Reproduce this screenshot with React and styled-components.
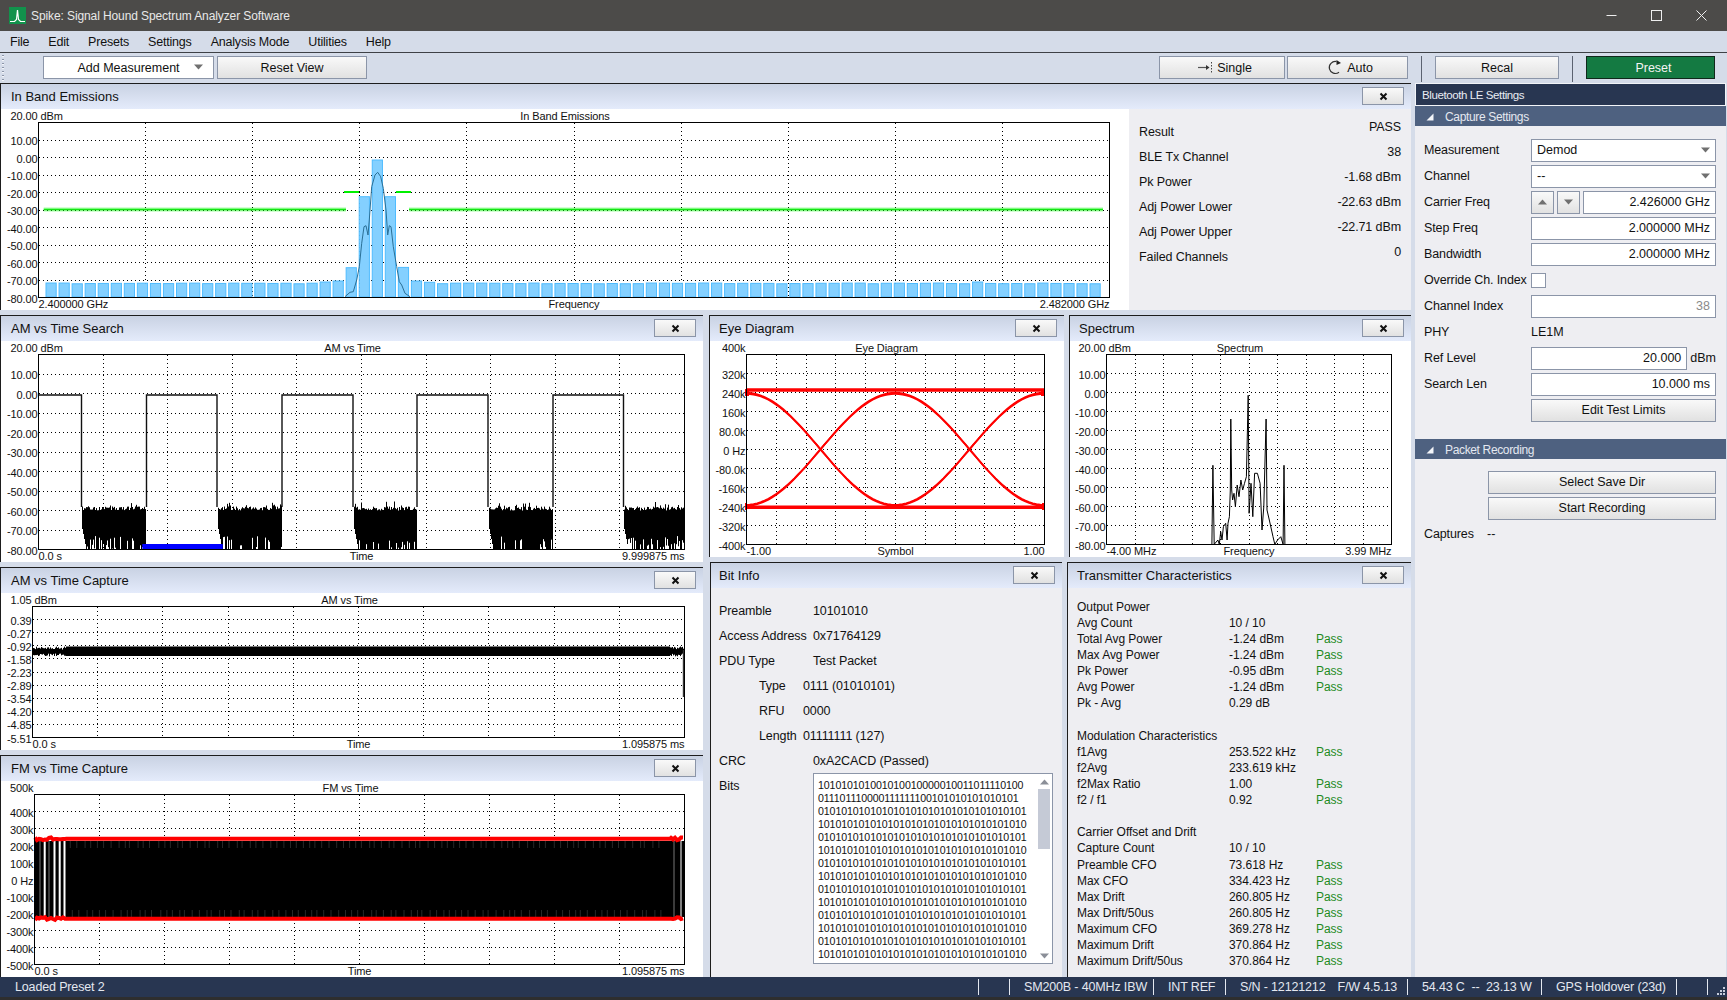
import React from 'react';
import styled, { createGlobalStyle } from 'styled-components';

const sans = '"Liberation Sans", Arial, sans-serif';
const colors = {
  chrome: '#d5dce9',
  panel: '#eeeef2',
  navy: '#283651',
  slate: '#4e6180',
  edge: '#8b95a8',
  rule: '#1d1d1d',
};

const Global = createGlobalStyle`
  html, body { margin: 0; padding: 0; background: ${colors.chrome}; overflow: hidden; }
  * { box-sizing: border-box; }
`;

const Window = styled.div`
  display: flex;
  flex-direction: column;
  width: 1727px;
  height: 1000px;
  overflow: hidden;
  background: ${colors.chrome};
  color: #111;
  font: 12.5px ${sans};
`;

const TitleBar = styled.div`
  display: flex;
  align-items: center;
  flex: 0 0 31px;
  padding: 0 6px 0 9px;
  gap: 5px;
  background: #4c4b49;
  color: #e8e8e8;
  font-size: 12px;
  letter-spacing: -0.1px;
`;

const TitleText = styled.span`
  flex: 1;
`;

const WindowButton = styled.div`
  display: flex;
  align-items: center;
  justify-content: center;
  width: 40px;
  height: 31px;
`;

const MenuBar = styled.div`
  display: flex;
  align-items: center;
  flex: 0 0 21px;
  padding-left: 10px;
  gap: 19px;
  letter-spacing: -0.2px;
`;

const ToolBar = styled.div`
  position: relative;
  display: flex;
  align-items: flex-start;
  flex: 0 0 31px;
  padding: 3px 12px 0 43px;
  border-top: 1px solid #3e4146;
`;

const Grip = styled.div`
  position: absolute;
  left: 2px;
  top: 2px;
  width: 2px;
  height: 26px;
  background: repeating-linear-gradient(#8b95a8 0 1px, #f4f6fa 1px 2px, transparent 2px 4px);
`;

const Button = styled.div`
  position: relative;
  display: flex;
  align-items: center;
  justify-content: center;
  gap: 4px;
  width: ${p => p.$w ? `${p.$w}px` : '100%'};
  height: 23px;
  margin-left: ${p => p.$ml || 0}px;
  padding-left: ${p => p.$shift || 0}px;
  border: 1px solid ${colors.edge};
  background: linear-gradient(#f9f9f9, #e1e1e1);
`;

const WhiteButton = styled(Button)`
  background: #fff;
`;

const PresetButton = styled(Button)`
  background: #147a42;
  border-color: #10281b;
  color: #f4f4f4;
`;

const CaretSlot = styled.span`
  display: flex;
  position: absolute;
  right: 10px;
  top: 7px;
`;

const Spacer = styled.div`
  flex: 1;
`;

const Separator = styled.div`
  flex: 0 0 1px;
  height: 26px;
  margin: 0 13px;
  background: #5b6270;
`;

const Main = styled.div`
  display: flex;
  flex: 1;
  min-height: 0;
`;

const Workspace = styled.div`
  display: flex;
  flex-direction: column;
  flex: 0 0 1411px;
  gap: 5px;
`;

const LowerArea = styled.div`
  display: flex;
  flex: 1;
  min-height: 0;
  gap: 6px;
`;

const Column = styled.div`
  display: flex;
  flex-direction: column;
  flex: ${p => p.$w ? `0 0 ${p.$w}px` : '1'};
  min-width: 0;
  gap: 5px;
`;

const Row = styled.div`
  display: flex;
  flex: ${p => p.$h ? `0 0 ${p.$h}px` : '1'};
  min-height: 0;
  gap: ${p => p.$gap || 0}px;
  padding-left: ${p => p.$inset || 0}px;
`;

const PanelBox = styled.section`
  display: flex;
  flex-direction: column;
  flex: ${p => p.$grow ? '1' : `0 0 ${p.$size}px`};
  min-width: 0;
  min-height: 0;
  border-top: 1px solid ${colors.rule};
  border-left: 1px solid ${colors.rule};
`;

const PanelHead = styled.header`
  display: flex;
  align-items: center;
  justify-content: space-between;
  flex: 0 0 25px;
  padding: 0 7px 1px ${p => p.$pad}px;
  background: linear-gradient(#c9d2e3, #e4ebfb);
  font-size: 13px;
`;

const CloseButton = styled.div`
  display: flex;
  align-items: center;
  justify-content: center;
  width: 42px;
  height: 18px;
  border: 1px solid ${colors.edge};
  background: linear-gradient(#f9f9f9, #e1e1e1);
`;

const PanelBody = styled.div`
  display: flex;
  flex: 1;
  min-height: 0;
  background: ${p => p.$light ? colors.panel : '#fff'};
`;

const ChartSvg = styled.svg`
  display: block;
  flex: none;
  text {
    font: 11px ${sans};
    letter-spacing: -0.1px;
    fill: #111;
  }
`;

const ResultList = styled.div`
  flex: 1;
  padding: 9px 10px 0 10px;
  background: ${colors.panel};
  letter-spacing: -0.1px;
`;

const ResultRow = styled.div`
  display: flex;
  justify-content: space-between;
  height: 25px;
`;

const ResultLabel = styled.span`
  padding-top: 7px;
`;

const ResultValue = styled.span`
  padding-top: 2px;
`;

const BitList = styled.div`
  flex: 1;
  padding: 10px 9px 0 8px;
`;

const BitRow = styled.div`
  display: flex;
  align-items: ${p => p.$top ? 'flex-start' : 'center'};
  height: ${p => p.$top ? 'auto' : '25px'};
  padding-left: ${p => p.$indent || 0}px;
  letter-spacing: -0.1px;
`;

const BitLabel = styled.span`
  flex: 0 0 ${p => p.$w}px;
  padding-top: ${p => p.$top ? 6 : 0}px;
`;

const BitBox = styled.div`
  display: flex;
  flex: 1;
  height: 191px;
  border: 1px solid ${colors.edge};
  background: #fff;
`;

const BitText = styled.pre`
  flex: 1;
  margin: 0;
  padding: 5px 0 0 4px;
  overflow: hidden;
  font: 10.6px/13px ${sans};
`;

const ScrollTrack = styled.div`
  display: flex;
  flex-direction: column;
  align-items: center;
  flex: 0 0 16px;
  padding: 5px 2px 4px;
`;

const ScrollThumb = styled.div`
  width: 12px;
  height: 60px;
  margin: 4px 0 auto;
  background: #c5cad6;
`;

const CharGrid = styled.div`
  display: grid;
  grid-template-columns: 152px 87px 1fr;
  grid-auto-rows: 16.14px;
  align-items: center;
  flex: 1;
  padding: 10.5px 0 0 9px;
  font-size: 12px;
  letter-spacing: -0.05px;
`;

const PassText = styled.span`
  color: #1e8b1e;
`;

const GroupTitle = styled.span`
  grid-column: 1 / -1;
`;

const BlankRow = styled.span`
  grid-column: 1 / -1;
`;

const SidePanel = styled.aside`
  flex: 1;
  margin: 0 1px 0 4px;
  background: ${colors.panel};
`;

const SideTitle = styled.div`
  display: flex;
  align-items: center;
  height: 23px;
  padding-left: 6px;
  border: 1px solid #f2f4f8;
  background: ${colors.navy};
  color: #e9ecf3;
  font-size: 11.5px;
  letter-spacing: -0.4px;
`;

const SectionHead = styled.div`
  display: flex;
  align-items: center;
  gap: 11px;
  height: 20px;
  padding: 1px 0 0 11px;
  background: ${colors.slate};
  color: #e4e8f0;
  font-size: 12px;
  letter-spacing: -0.35px;
`;

const SectionBody = styled.div`
  padding: ${p => p.$top}px 10px ${p => p.$bottom}px 9px;
`;

const FormRow = styled.div`
  display: flex;
  align-items: center;
  justify-content: ${p => p.$end ? 'flex-end' : 'flex-start'};
  height: 26px;
`;

const FieldLabel = styled.span`
  flex: 0 0 ${p => p.$w || 107}px;
  letter-spacing: -0.12px;
`;

const Field = styled.div`
  display: flex;
  align-items: center;
  justify-content: ${p => p.$left ? 'space-between' : 'flex-end'};
  flex: 1;
  height: 23px;
  padding: 0 5px;
  border: 1px solid ${colors.edge};
  background: #fff;
  color: ${p => p.$muted ? '#8a8a8a' : 'inherit'};
`;

const SpinButton = styled(Button)`
  flex: 0 0 23px;
  margin-right: 3px;
`;

const CheckBox = styled.div`
  width: 15px;
  height: 15px;
  border: 1px solid ${colors.edge};
  background: #fff;
`;

const UnitText = styled.span`
  flex: 0 0 26px;
  padding-left: 3px;
`;

const StatusBar = styled.footer`
  display: flex;
  align-items: center;
  flex: 0 0 20px;
  background: ${colors.navy};
  color: #e4e8f0;
  font-size: 12.5px;
`;

const StatusCell = styled.div`
  display: flex;
  align-items: center;
  gap: 12px;
  flex: 0 0 ${p => p.$w}px;
  height: 16px;
  padding-left: ${p => p.$pad || 14}px;
  border-right: 1px solid #e4e8f0;
  letter-spacing: -0.15px;
  white-space: pre;
`;

const ResizeGrip = styled.div`
  display: flex;
  align-items: flex-end;
  justify-content: flex-end;
  flex: 1;
  height: 20px;
  padding: 0 2px 2px 0;
`;

const BottomEdge = styled.div`
  flex: 0 0 3px;
  background: #2e2e2e;
`;

// seeded so the noise in the traces stays the same on every load
const makeRandom = seed => () => {
  seed = (seed + 0x6d2b79f5) | 0;
  let t = Math.imul(seed ^ (seed >>> 15), 1 | seed);
  t = (t + Math.imul(t ^ (t >>> 7), 61 | t)) ^ t;
  return ((t ^ (t >>> 14)) >>> 0) / 4294967296;
};

const range = (n, fn) => Array.from({ length: n }, (_, i) => fn(i));
const polyline = pts => pts.map(([x, y], i) => `${i ? 'L' : 'M'}${x.toFixed(1)} ${y.toFixed(1)}`).join('');

const dbmLabels = ['10.00', '0.00', '-10.00', '-20.00', '-30.00', '-40.00', '-50.00', '-60.00', '-70.00', '-80.00'];
const freqLabels = ['400k', '300k', '200k', '100k', '0 Hz', '-100k', '-200k', '-300k', '-400k', '-500k'];
const eyeLabels = ['320k', '240k', '160k', '80.0k', '0 Hz', '-80.0k', '-160k', '-240k', '-320k', '-400k'];
const capLabels = ['0.39', '-0.27', '-0.92', '-1.58', '-2.23', '-2.89', '-3.54', '-4.20', '-4.85', '-5.51'];

const Chart = ({ view, plot, title, top, unit, labels, bottom, children }) => {
  const [ox, oy, w, h] = view;
  const [l, t, r, b] = plot;
  const dx = (r - l) / 10;
  const dy = (b - t) / 10;
  const mid = (l + r) / 2;
  return (
    <ChartSvg width={w} height={h} viewBox={`${ox} ${oy} ${w} ${h}`}>
      <g stroke="#000" strokeDasharray="1.5 2.5" shapeRendering="crispEdges">
        {range(9, i => <line key={i} x1={l + dx * (i + 1)} x2={l + dx * (i + 1)} y1={t} y2={b} />)}
        {range(9, i => <line key={i} y1={t + dy * (i + 1)} y2={t + dy * (i + 1)} x1={l} x2={r} />)}
      </g>
      {children}
      <rect x={l} y={t} width={r - l} height={b - t} fill="none" stroke="#000" shapeRendering="crispEdges" />
      <text x={mid - 9} y={oy + 7} textAnchor="middle" dominantBaseline="central" letterSpacing="-0.25">{title}</text>
      <text x={l - 1} y={oy + 7} textAnchor="end" dominantBaseline="central">{top}</text>
      {unit && <text x={l + 2} y={oy + 7} dominantBaseline="central">{unit}</text>}
      {labels.map((s, i) => (
        <text key={s} x={l - 1} y={t + dy * (i + 1) + 1} textAnchor="end" dominantBaseline="central">{s}</text>
      ))}
      <text x={l} y={b + 6.5} dominantBaseline="central">{bottom[0]}</text>
      <text x={mid} y={b + 6.5} textAnchor="middle" dominantBaseline="central">{bottom[1]}</text>
      <text x={r} y={b + 6.5} textAnchor="end" dominantBaseline="central">{bottom[2]}</text>
    </ChartSvg>
  );
};

const barTops = { 21: 282, 22: 281, 23: 267.7, 24: 196.7, 25: 160, 26: 196.7, 27: 267.4, 28: 281, 29: 282.3, 71: 282 };

const BandTrace = () => {
  const rand = makeRandom(7);
  const bars = range(81, i => {
    const y = barTops[i] ?? 283 + rand() * 0.8;
    return <rect key={i} x={46 + i * 13.05} y={y} width={10.2} height={297 - y} fill="#84d0ff" stroke="#4fbcff" />;
  });
  const trace = [[135, 500], [150, 487], [160, 485], [170, 450], [178, 410], [185, 340], [192, 290], [198, 287], [204, 315], [208, 270], [215, 170], [225, 135], [233, 127], [242, 140], [250, 175], [258, 240], [263, 315], [268, 287], [273, 290], [280, 350], [290, 410], [298, 455], [305, 465], [315, 490], [330, 500]]
    .map(([x, y]) => [300 + x / 3, 130 + y / 3]);
  return (
    <>
      {bars}
      <path d={polyline(trace)} fill="none" stroke="#2a6f96" />
      <path d="M43.7 209.5H346M409 209.5H1103" stroke="#00ff00" strokeOpacity="0.35" strokeWidth="4" />
      <path d="M43.7 209.5H346M409 209.5H1103" stroke="#14e614" strokeWidth="1.5" />
      <path d="M344 192H359M396 192H411" stroke="#00f000" strokeWidth="2" />
    </>
  );
};

const NoiseBlock = ({ from, to, seed }) => {
  const rand = makeRandom(seed);
  let d = '';
  for (let x = from; x < to; x += 1) {
    const spike = rand() < 0.14 ? rand() * 6 : 0;
    const top = 506.5 + rand() * 4 - spike;
    const end = rand() < 0.3 ? 549 - rand() * 13 : 549;
    const edge = x - from < 4 ? 549 - (4 - (x - from)) * 5 : end;
    d += `M${x + 0.5} ${top.toFixed(1)}V${edge.toFixed(1)}`;
  }
  return <path d={d} stroke="#000" fill="none" />;
};

const SearchTrace = () => (
  <>
    <path d="M38 395H81.5V507M146.5 507V395H217V507M282 507V395H353V507M417 507V395H488V507M553 507V395H623.5V507" fill="none" stroke="#111" strokeWidth="1.4" />
    <NoiseBlock from={82} to={146} seed={1} />
    <NoiseBlock from={218} to={282} seed={2} />
    <NoiseBlock from={354} to={417} seed={3} />
    <NoiseBlock from={489} to={553} seed={4} />
    <NoiseBlock from={624} to={684} seed={5} />
    <rect x={142.3} y={544} width={80.4} height={5} fill="#0000ff" />
  </>
);

const CaptureTrace = () => {
  const rand = makeRandom(11);
  const jag = (from, to) => {
    let d = '';
    for (let x = from; x < to; x += 1) d += `M${x + 0.5} ${(646.5 + rand() * 3).toFixed(1)}V${(653.5 + rand() * 3).toFixed(1)}`;
    return d;
  };
  return (
    <>
      <path d={jag(33, 66)} stroke="#000" fill="none" />
      <rect x={66} y={646.5} width={604} height={9.5} fill="#000" />
      <path d={jag(670, 684)} stroke="#000" fill="none" />
      <path d="M683.5 650V697" stroke="#333" strokeWidth="1.4" />
    </>
  );
};

const FmTrace = () => {
  const rand = makeRandom(23);
  const edge = y => {
    const pts = [];
    for (let x = 35; x <= 66; x += 2) pts.push([x, y + (rand() - 0.5) * 3]);
    pts.push([66.5, y], [670, y]);
    for (let x = 671; x <= 684; x += 2) pts.push([x, y + (rand() - 0.5) * 3]);
    return polyline(pts);
  };
  const texture = range(90, i => 70 + i * 6.6 + rand() * 3).map(x => `M${x.toFixed(1)} 841V848M${(x + 2).toFixed(1)} 910V917`).join('');
  return (
    <>
      <rect x={35} y={841} width={649} height={76} fill="#000" />
      <path d={texture} stroke="#3a3a3a" strokeWidth="0.7" />
      <path d="M44.7 841V917M54.5 841V917M59.7 841V917M64.5 841V917" stroke="#fff" strokeWidth="2" />
      <path d="M40 841V917M49 841V917M674 841V917" stroke="#777" strokeWidth="1" />
      <path d="M681 841V917" stroke="#fff" strokeWidth="1" />
      <path d={edge(838.7)} fill="none" stroke="#ff0000" strokeWidth="4" />
      <path d={edge(918.7)} fill="none" stroke="#ff0000" strokeWidth="4" />
    </>
  );
};

const EyeTrace = () => {
  const sCurve = (x0, x1, dir, amp) => polyline(range(41, i => {
    const t = i / 40;
    return [x0 + (x1 - x0) * t, 449.3 - dir * amp * Math.cos(Math.PI * t)];
  }));
  const curves = [[746, 895, 1], [746, 895, -1], [895, 1044, 1], [895, 1044, -1]];
  return (
    <>
      <path d="M746 390H1044M746 507.3H1044" stroke="#ff0000" strokeWidth="3.5" />
      {curves.map(([a, b, dir]) => [55.5, 56.5].map(amp => (
        <path key={`${a}${dir}${amp}`} d={sCurve(a, b, dir, amp)} fill="none" stroke="#ff0000" strokeWidth="1.8" />
      )))}
      <path d="M746 389V396M748 389V396M1044 389V396M1042 389V396M746 503V510M1043 503V510" stroke="#ff0000" strokeWidth="2" />
    </>
  );
};

const spectrumPoints = [[1115, 703], [1117, 466], [1120, 703], [1128, 690], [1131, 703], [1134, 665], [1137, 690], [1140, 650], [1145, 640], [1148, 690], [1150, 640], [1153, 620], [1155, 540], [1156, 327], [1158, 540], [1160, 570], [1163, 550], [1166, 590], [1170, 525], [1174, 560], [1178, 510], [1182, 540], [1186, 520], [1190, 500], [1194, 256], [1196, 610], [1200, 520], [1204, 620], [1208, 490], [1214, 490], [1220, 520], [1224, 660], [1228, 590], [1233, 327], [1235, 600], [1240, 630], [1248, 680], [1252, 703], [1258, 690], [1265, 680], [1270, 703], [1272, 466], [1274, 703]];

const SpectrumTrace = () => (
  <path d={polyline(spectrumPoints.map(([x, y]) => [700 + x / 2.178, 310 + y / 3]))} fill="none" stroke="#000" />
);

const CloseIcon = () => (
  <svg width="9" height="9" viewBox="0 0 9 9"><path d="M1.5 1.5l6 6M7.5 1.5l-6 6" stroke="#111" strokeWidth="2" /></svg>
);

const Panel = ({ title, size, grow, light, pad = 9, children }) => (
  <PanelBox $size={size} $grow={grow}>
    <PanelHead $pad={pad}>{title}<CloseButton><CloseIcon /></CloseButton></PanelHead>
    <PanelBody $light={light}>{children}</PanelBody>
  </PanelBox>
);

const Caret = ({ up, color = '#707070' }) => (
  <svg width="9" height="6" viewBox="0 0 9 6"><path d={up ? 'M4.5 0.5L9 5.5H0z' : 'M0 0.5H9L4.5 5.5z'} fill={color} /></svg>
);

const results = [['Result', 'PASS'], ['BLE Tx Channel', '38'], ['Pk Power', '-1.68 dBm'], ['Adj Power Lower', '-22.63 dBm'], ['Adj Power Upper', '-22.71 dBm'], ['Failed Channels', '0']];

const bitLines = [
  '101010101001010010000010011011110100',
  '011101110000111111100101010101010101',
  ...range(13, i => (i % 2 ? '10' : '01').repeat(18)),
];

const charRows = [
  ['Output Power'],
  ['Avg Count', '10 / 10'],
  ['Total Avg Power', '-1.24 dBm', 'Pass'],
  ['Max Avg Power', '-1.24 dBm', 'Pass'],
  ['Pk Power', '-0.95 dBm', 'Pass'],
  ['Avg Power', '-1.24 dBm', 'Pass'],
  ['Pk - Avg', '0.29 dB'],
  [],
  ['Modulation Characteristics'],
  ['f1Avg', '253.522 kHz', 'Pass'],
  ['f2Avg', '233.619 kHz'],
  ['f2Max Ratio', '1.00', 'Pass'],
  ['f2 / f1', '0.92', 'Pass'],
  [],
  ['Carrier Offset and Drift'],
  ['Capture Count', '10 / 10'],
  ['Preamble CFO', '73.618 Hz', 'Pass'],
  ['Max CFO', '334.423 Hz', 'Pass'],
  ['Max Drift', '260.805 Hz', 'Pass'],
  ['Max Drift/50us', '260.805 Hz', 'Pass'],
  ['Maximum CFO', '369.278 Hz', 'Pass'],
  ['Maximum Drift', '370.864 Hz', 'Pass'],
  ['Maximum Drift/50us', '370.864 Hz', 'Pass'],
];

const CharRow = ({ cells }) => {
  if (!cells.length) return <BlankRow />;
  if (cells.length === 1) return <GroupTitle>{cells[0]}</GroupTitle>;
  return (
    <>
      <span>{cells[0]}</span>
      <span>{cells[1]}</span>
      <PassText>{cells[2]}</PassText>
    </>
  );
};

const SelectField = ({ value }) => (
  <Field $left>{value}<Caret /></Field>
);

const Triangle = () => (
  <svg width="8" height="8" viewBox="0 0 8 8"><path d="M7.5 0.5V7.5H0.5z" fill="#f4f6fa" /></svg>
);

export default function App() {
  return (
    <Window>
      <Global />
      <TitleBar>
        <svg width="17" height="17" viewBox="0 0 17 17">
          <rect width="17" height="17" fill="#12924c" />
          <path d="M1 14.5H5.5L7.5 12.5L8.5 3L9.5 12.5L11.5 14.5H16" fill="none" stroke="#fff" strokeWidth="1.2" />
        </svg>
        <TitleText>Spike: Signal Hound Spectrum Analyzer Software</TitleText>
        <WindowButton>
          <svg width="11" height="11" viewBox="0 0 11 11"><path d="M0.5 5.5H10.5" stroke="#eee" /></svg>
        </WindowButton>
        <WindowButton>
          <svg width="11" height="11" viewBox="0 0 11 11"><rect x="0.5" y="0.5" width="10" height="10" fill="none" stroke="#eee" /></svg>
        </WindowButton>
        <WindowButton>
          <svg width="11" height="11" viewBox="0 0 11 11"><path d="M0.5 0.5L10.5 10.5M10.5 0.5L0.5 10.5" stroke="#eee" /></svg>
        </WindowButton>
      </TitleBar>

      <MenuBar>
        {['File', 'Edit', 'Presets', 'Settings', 'Analysis Mode', 'Utilities', 'Help'].map(m => <span key={m}>{m}</span>)}
      </MenuBar>

      <ToolBar>
        <Grip />
        <WhiteButton $w={171}>Add Measurement<CaretSlot><Caret /></CaretSlot></WhiteButton>
        <Button $w={150} $ml={3}>Reset View</Button>
        <Spacer />
        <Button $w={126} $shift={6}>
          <svg width="15" height="11" viewBox="0 0 15 11">
            <path d="M0 5.5H10" stroke="#555" strokeWidth="1.2" />
            <path d="M8 3L11.5 5.5L8 8z" fill="#333" />
            <path d="M13.5 0V11" stroke="#444" strokeDasharray="1.5 1.5" />
          </svg>
          Single
        </Button>
        <Button $w={121} $ml={2} $shift={6}>
          <svg width="15" height="15" viewBox="0 0 15 15">
            <path d="M11 12.2A6 6 0 1 1 8.5 1.6" fill="none" stroke="#333" strokeWidth="1.2" />
            <path d="M8.5 0L13 3L8.5 5z" fill="#222" />
          </svg>
          Auto
        </Button>
        <Separator />
        <Button $w={124}>Recal</Button>
        <Separator />
        <PresetButton $w={129} $shift={6}>Preset</PresetButton>
      </ToolBar>

      <Main>
        <Workspace>
          <Panel title="In Band Emissions" size={227} pad={10}>
            <Chart
              view={[1, 109, 1128, 201]}
              plot={[38.5, 122.5, 1109.5, 297.5]}
              title="In Band Emissions"
              top="20.00"
              unit="dBm"
              labels={dbmLabels}
              bottom={['2.400000 GHz', 'Frequency', '2.482000 GHz']}
            >
              <BandTrace />
            </Chart>
            <ResultList>
              {results.map(([k, v]) => (
                <ResultRow key={k}><ResultLabel>{k}</ResultLabel><ResultValue>{v}</ResultValue></ResultRow>
              ))}
            </ResultList>
          </Panel>

          <LowerArea>
            <Column $w={703}>
              <Panel title="AM vs Time Search" size={247} pad={10}>
                <Chart
                  view={[1, 341, 702, 220]}
                  plot={[38.5, 354.5, 684.5, 549.5]}
                  title="AM vs Time"
                  top="20.00"
                  unit="dBm"
                  labels={dbmLabels}
                  bottom={['0.0 s', 'Time', '9.999875 ms']}
                >
                  <SearchTrace />
                </Chart>
              </Panel>
              <Panel title="AM vs Time Capture" size={183} pad={10}>
                <Chart
                  view={[1, 593, 702, 157]}
                  plot={[32.5, 606.5, 684.5, 737.5]}
                  title="AM vs Time"
                  top="1.05"
                  unit="dBm"
                  labels={capLabels}
                  bottom={['0.0 s', 'Time', '1.095875 ms']}
                >
                  <CaptureTrace />
                </Chart>
              </Panel>
              <Panel title="FM vs Time Capture" grow pad={10}>
                <Chart
                  view={[1, 781, 702, 196]}
                  plot={[34.5, 794.5, 684.5, 964.5]}
                  title="FM vs Time"
                  top="500k"
                  labels={freqLabels}
                  bottom={['0.0 s', 'Time', '1.095875 ms']}
                >
                  <FmTrace />
                </Chart>
              </Panel>
            </Column>

            <Column>
              <Row $h={242} $gap={5}>
                <Panel title="Eye Diagram" size={355}>
                  <Chart
                    view={[710, 341, 354, 216]}
                    plot={[746.5, 354.5, 1044.5, 544.5]}
                    title="Eye Diagram"
                    top="400k"
                    labels={eyeLabels}
                    bottom={['-1.00', 'Symbol', '1.00']}
                  >
                    <EyeTrace />
                  </Chart>
                </Panel>
                <Panel title="Spectrum" grow>
                  <Chart
                    view={[1070, 341, 341, 216]}
                    plot={[1106.5, 354.5, 1391.5, 544.5]}
                    title="Spectrum"
                    top="20.00"
                    unit="dBm"
                    labels={dbmLabels}
                    bottom={['-4.00 MHz', 'Frequency', '3.99 MHz']}
                  >
                    <SpectrumTrace />
                  </Chart>
                </Panel>
              </Row>

              <Row $gap={5} $inset={1}>
                <Panel title="Bit Info" size={352} light pad={8}>
                  <BitList>
                    <BitRow><BitLabel $w={94}>Preamble</BitLabel>10101010</BitRow>
                    <BitRow><BitLabel $w={94}>Access Address</BitLabel>0x71764129</BitRow>
                    <BitRow><BitLabel $w={94}>PDU Type</BitLabel>Test Packet</BitRow>
                    <BitRow $indent={40}><BitLabel $w={44}>Type</BitLabel>0111 (01010101)</BitRow>
                    <BitRow $indent={40}><BitLabel $w={44}>RFU</BitLabel>0000</BitRow>
                    <BitRow $indent={40}><BitLabel $w={44}>Length</BitLabel>01111111 (127)</BitRow>
                    <BitRow><BitLabel $w={94}>CRC</BitLabel>0xA2CACD (Passed)</BitRow>
                    <BitRow $top>
                      <BitLabel $w={94} $top>Bits</BitLabel>
                      <BitBox>
                        <BitText>{bitLines.join('\n')}</BitText>
                        <ScrollTrack>
                          <Caret up color="#8b8f98" />
                          <ScrollThumb />
                          <Caret color="#8b8f98" />
                        </ScrollTrack>
                      </BitBox>
                    </BitRow>
                  </BitList>
                </Panel>
                <Panel title="Transmitter Characteristics" grow light>
                  <CharGrid>
                    {charRows.map((cells, i) => <CharRow key={i} cells={cells} />)}
                  </CharGrid>
                </Panel>
              </Row>
            </Column>
          </LowerArea>
        </Workspace>

        <SidePanel>
          <SideTitle>Bluetooth LE Settings</SideTitle>
          <SectionHead><Triangle />Capture Settings</SectionHead>
          <SectionBody $top={11} $bottom={16}>
            <FormRow><FieldLabel>Measurement</FieldLabel><SelectField value="Demod" /></FormRow>
            <FormRow><FieldLabel>Channel</FieldLabel><SelectField value="--" /></FormRow>
            <FormRow>
              <FieldLabel>Carrier Freq</FieldLabel>
              <SpinButton $w={23}><Caret up /></SpinButton>
              <SpinButton $w={23}><Caret /></SpinButton>
              <Field>2.426000 GHz</Field>
            </FormRow>
            <FormRow><FieldLabel>Step Freq</FieldLabel><Field>2.000000 MHz</Field></FormRow>
            <FormRow><FieldLabel>Bandwidth</FieldLabel><Field>2.000000 MHz</Field></FormRow>
            <FormRow><FieldLabel>Override Ch. Index</FieldLabel><CheckBox /></FormRow>
            <FormRow><FieldLabel>Channel Index</FieldLabel><Field $muted>38</Field></FormRow>
            <FormRow><FieldLabel>PHY</FieldLabel>LE1M</FormRow>
            <FormRow><FieldLabel>Ref Level</FieldLabel><Field>20.000</Field><UnitText>dBm</UnitText></FormRow>
            <FormRow><FieldLabel>Search Len</FieldLabel><Field>10.000 ms</Field></FormRow>
            <FormRow><FieldLabel /><Button>Edit Test Limits</Button></FormRow>
          </SectionBody>
          <SectionHead><Triangle />Packet Recording</SectionHead>
          <SectionBody $top={10} $bottom={0}>
            <FormRow $end><Button $w={228}>Select Save Dir</Button></FormRow>
            <FormRow $end><Button $w={228}>Start Recording</Button></FormRow>
            <FormRow><FieldLabel $w={63}>Captures</FieldLabel>--</FormRow>
          </SectionBody>
        </SidePanel>
      </Main>

      <StatusBar>
        <StatusCell $w={979} $pad={15}>Loaded Preset 2</StatusCell>
        <StatusCell $w={31} />
        <StatusCell $w={144}>SM200B - 40MHz IBW</StatusCell>
        <StatusCell $w={72}>INT REF</StatusCell>
        <StatusCell $w={182}><span>S/N - 12121212</span><span>F/W 4.5.13</span></StatusCell>
        <StatusCell $w={134}>54.43 C  --  23.13 W</StatusCell>
        <StatusCell $w={135}>GPS Holdover (23d)</StatusCell>
        <StatusCell $w={31} />
        <ResizeGrip>
          <svg width="8" height="8" viewBox="0 0 8 8">
            <path d="M6 0h2v2H6zM3 3h2v2H3zM6 3h2v2H6zM0 6h2v2H0zM3 6h2v2H3zM6 6h2v2H6z" fill="#c8cedb" />
          </svg>
        </ResizeGrip>
      </StatusBar>
      <BottomEdge />
    </Window>
  );
}
